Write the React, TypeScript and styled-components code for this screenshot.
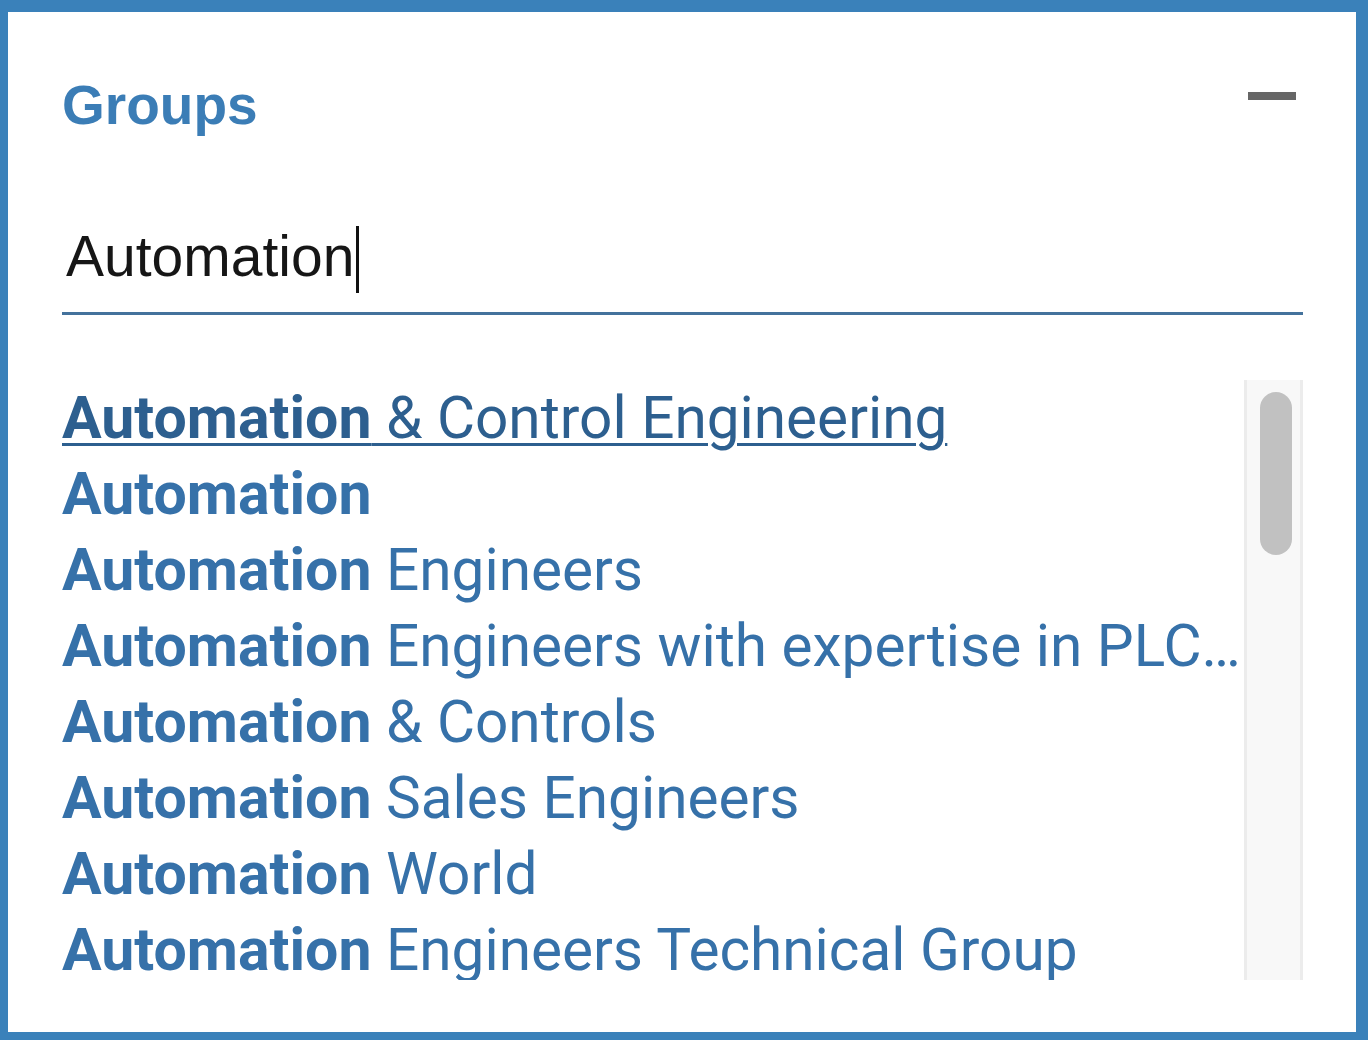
import styled, { createGlobalStyle } from "styled-components";

const GlobalStyle = createGlobalStyle`
  html, body {
    margin: 0;
    padding: 0;
    background: #ffffff;
  }
`;

const query = "Automation";

const groups = [
  "Automation & Control Engineering",
  "Automation",
  "Automation Engineers",
  "Automation Engineers with expertise in PLC, SCADA and DCS",
  "Automation & Controls",
  "Automation Sales Engineers",
  "Automation World",
  "Automation Engineers Technical Group",
  "Automation Testing Professionals",
  "Automation Anywhere Community",
  "Automation Professionals Network",
  "Automation & Robotics",
];

function App() {
  return (
    <>
      <GlobalStyle />
      <Frame>
        <Header>
          <Title>Groups</Title>
          <CollapseBtn aria-label="Collapse" />
        </Header>
        <SearchField role="textbox">
          <SearchText>{query}</SearchText>
          <Caret />
        </SearchField>
        <ResultArea>
          <ResultList>
            {groups.map((name, index) => (
              <ResultItem key={index} $active={index === 0}>
                <Match>{query}</Match>
                {name.slice(query.length)}
              </ResultItem>
            ))}
          </ResultList>
          <ScrollTrack>
            <ScrollThumb />
          </ScrollTrack>
        </ResultArea>
      </Frame>
    </>
  );
}

const Frame = styled.div`
  box-sizing: border-box;
  width: 1368px;
  height: 1040px;
  border-style: solid;
  border-color: #3a81ba;
  border-width: 12px 12px 8px 8px;
  padding: 61px 53px 0 54px;
  display: flex;
  flex-direction: column;
  background: #ffffff;
`;

const Header = styled.div`
  display: flex;
  justify-content: space-between;
  align-items: flex-start;
`;

const Title = styled.h2`
  margin: 0;
  font-family: "Liberation Sans", Arial, sans-serif;
  font-weight: 700;
  font-size: 55px;
  line-height: 64px;
  color: #3b7db6;
`;

const CollapseBtn = styled.button`
  width: 48px;
  height: 8px;
  margin: 19px 7px 0 0;
  padding: 0;
  border: none;
  background: #666666;
  cursor: pointer;
`;

const SearchField = styled.div`
  margin-top: 84px;
  padding: 0 0 21px 4px;
  height: 70px;
  display: flex;
  align-items: center;
  border-bottom: 3px solid #44729c;
`;

const SearchText = styled.span`
  font-family: "Liberation Sans", Arial, sans-serif;
  font-size: 57px;
  line-height: 70px;
  color: #161616;
`;

const Caret = styled.span`
  display: inline-block;
  width: 3px;
  height: 67px;
  margin: 0 0 -6px 2px;
  background: #111111;
`;

const ResultArea = styled.div`
  display: flex;
  margin-top: 65px;
  height: 600px;
`;

const ResultList = styled.ul`
  flex: 1;
  min-width: 0;
  list-style: none;
  margin: 0;
  padding: 0;
  overflow: hidden;
`;

const ResultItem = styled.li<{ $active: boolean }>`
  font-family: Roboto, "Liberation Sans", sans-serif;
  font-size: 58.5px;
  line-height: 76px;
  white-space: nowrap;
  overflow: hidden;
  text-overflow: ellipsis;
  cursor: pointer;
  color: ${({ $active }) => ($active ? "#2d5f8f" : "#3671a9")};
  text-decoration: ${({ $active }) => ($active ? "underline" : "none")};
  text-decoration-thickness: 3px;
  text-underline-offset: 5px;
`;

const Match = styled.strong`
  font-size: 59px;
  font-weight: 700;
`;

const ScrollTrack = styled.div`
  box-sizing: border-box;
  width: 59px;
  flex-shrink: 0;
  padding: 12px 0 0 13px;
  background: #f8f8f8;
  border-left: 3px solid #ececec;
  border-right: 3px solid #ececec;
`;

const ScrollThumb = styled.div`
  width: 32px;
  height: 163px;
  border-radius: 16px;
  background: #c1c1c1;
`;

export default App;
